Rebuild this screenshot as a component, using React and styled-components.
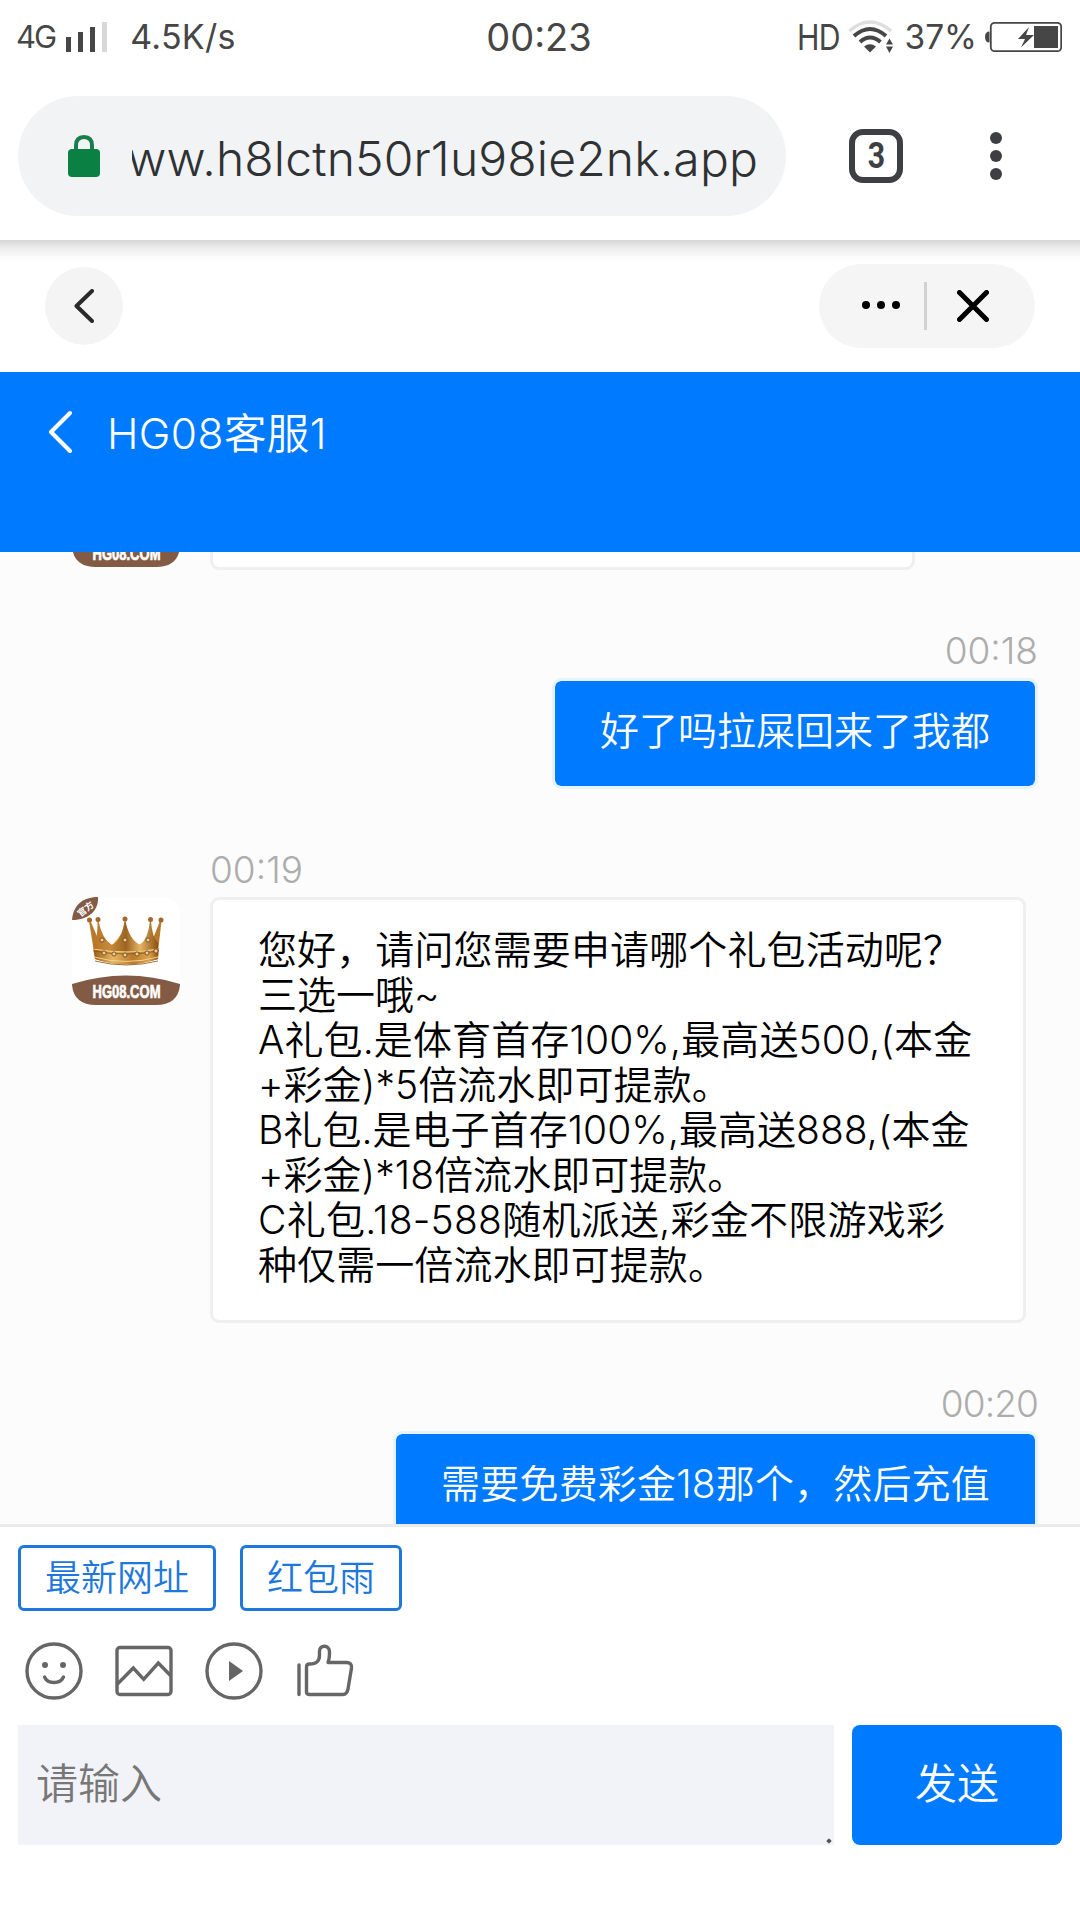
import React from "react";
import styled, { createGlobalStyle } from "styled-components";

const GlobalStyle = createGlobalStyle`
	* {
		box-sizing: border-box;
	}

	body {
		margin: 0;
		background-color: #fff;
		font-family: Inter, "Noto Sans CJK SC", sans-serif;
	}

	svg {
		display: block;
		flex: none;
	}
`;

const Page = styled.div`
	width: 1080px;
	height: 1920px;
	display: flex;
	flex-direction: column;
	overflow: hidden;
	background-color: #fff;
`;

/* ---------- status bar ---------- */

const StatusBar = styled.div`
	height: 96px;
	flex: none;
	display: grid;
	grid-template-columns: 1fr auto 1fr;
	align-items: start;
	padding: 12px 18px 0 16px;
	color: #464646;
`;

const StatusGroup = styled.div`
	display: flex;
	align-items: center;
	height: 50px;
	justify-content: ${(props) => (props.$end ? "flex-end" : "flex-start")};
`;

const StatusText = styled.span`
	display: inline-block;
	font-size: ${(props) => props.$size}px;
	line-height: 50px;
	letter-spacing: ${(props) => props.$spacing || 0}px;
	margin-left: ${(props) => props.$left || 0}px;
	white-space: nowrap;
	transform: scaleX(${(props) => props.$squeeze || 1});
	transform-origin: right center;
`;

const Signal = styled.svg`
	margin: 0 0 0 11px;
`;

const Wifi = styled.svg`
	margin: 0 10px 0 9px;
`;

const Battery = styled.svg`
	margin-left: 8px;
`;

/* ---------- browser bar ---------- */

const BrowserBar = styled.div`
	height: 144px;
	flex: none;
	display: flex;
	align-items: flex-start;
	padding-left: 18px;
	background-color: #fff;
	position: relative;
	z-index: 1;

	&::after {
		content: "";
		position: absolute;
		left: 0;
		right: 0;
		top: 144px;
		height: 22px;
		background: linear-gradient(#d6d6d6, #ececec 35%, #fafafa 75%, #fff);
	}
`;

const AddressPill = styled.div`
	width: 768px;
	height: 120px;
	border-radius: 60px;
	background-color: #f1f3f5;
	display: flex;
	align-items: center;
	padding-left: 50px;
`;

const UrlClip = styled.div`
	width: 626px;
	height: 70px;
	margin: 5px 0 0 32px;
	overflow: hidden;
	display: flex;
	justify-content: flex-end;
`;

const Url = styled.span`
	font-size: 48px;
	font-weight: 300;
	line-height: 70px;
	letter-spacing: ${(props) => props.$spacing}px;
	color: #2f3133;
	white-space: nowrap;
`;

const TabCount = styled.div`
	width: 54px;
	height: 54px;
	margin: 33px 0 0 63px;
	border: 6px solid #3d3f42;
	border-radius: 14px;
	display: flex;
	align-items: center;
	justify-content: center;
`;

const TabNumber = styled.span`
	color: #3d3f42;
	font-family: Roboto, sans-serif;
	font-size: 36px;
	font-weight: 700;
	line-height: 42px;
	transform: scaleX(0.84);
`;

const Kebab = styled.div`
	margin: 36px 0 0 87px;
	display: flex;
	flex-direction: column;
	gap: 6px;
`;

const KebabDot = styled.span`
	width: 12px;
	height: 12px;
	border-radius: 50%;
	background-color: #3d3f42;
`;

/* ---------- mini app bar ---------- */

const AppBar = styled.div`
	height: 132px;
	flex: none;
	display: flex;
	justify-content: space-between;
	align-items: center;
	padding: 0 45px;
`;

const RoundButton = styled.div`
	width: 78px;
	height: 78px;
	border-radius: 50%;
	background-color: #f4f4f4;
	display: flex;
	align-items: center;
	justify-content: center;
	position: relative;
	z-index: 2;
`;

const Capsule = styled.div`
	width: 216px;
	height: 84px;
	border-radius: 42px;
	background-color: #f5f5f5;
	display: flex;
	align-items: center;
	position: relative;
	z-index: 2;
`;

const CapsuleDots = styled.div`
	display: flex;
	gap: 7px;
	margin: -2px 24px 0 43px;
`;

const CapsuleDot = styled.span`
	width: 8px;
	height: 8px;
	border-radius: 50%;
	background-color: #000;
`;

const CapsuleDivider = styled.div`
	width: 3px;
	height: 48px;
	background-color: #d2d2d2;
	margin-right: 30px;
`;

/* ---------- chat ---------- */

const ChatHeader = styled.div`
	height: 180px;
	flex: none;
	display: flex;
	align-items: flex-start;
	padding: 30px 0 0 48px;
	background-color: #007aff;
	color: #fff;
`;

const ChatTitle = styled.div`
	margin-left: 35px;
	font-size: 42.5px;
	font-weight: 350;
	line-height: 63px;
	letter-spacing: 0.4px;
`;

const ChatBody = styled.div`
	flex: 1;
	min-height: 0;
	overflow: hidden;
	background-color: #fcfcfc;
	display: flex;
	flex-direction: column;
	gap: 54px;
	padding: 0 42px 0 72px;
`;

const Incoming = styled.div`
	display: grid;
	grid-template-columns: 108px auto;
	column-gap: 30px;
	justify-content: start;
	flex: none;
	margin-top: ${(props) => (props.$scrolled ? "-93px" : "0")};
`;

const Outgoing = styled.div`
	display: flex;
	flex-direction: column;
	align-items: flex-end;
	flex: none;
`;

const Time = styled.div`
	grid-column: 2;
	height: 54px;
	line-height: 54px;
	font-size: 37px;
	font-weight: 300;
	letter-spacing: ${(props) => props.$spacing || 0}px;
	color: #adadad;
`;

const Bubble = styled.div`
	min-height: 111px;
	width: ${(props) => (props.$width ? props.$width + "px" : "auto")};
	padding: 27px 45px 33px;
	border: 3px solid ${(props) => (props.$mine ? "#e6f3fa" : "#efefef")};
	border-radius: 9px;
	background-color: ${(props) => (props.$mine ? "#007aff" : "#fff")};
	background-clip: padding-box;
	color: ${(props) => (props.$mine ? "#fff" : "#000")};
	font-size: 39px;
	font-weight: 350;
	line-height: 45px;
	white-space: nowrap;
`;

const Line = styled.div`
	height: 45px;
	letter-spacing: ${(props) => props.$spacing || 0}px;
`;

/* ---------- composer ---------- */

const Composer = styled.div`
	height: 396px;
	flex: none;
	border-top: 3px solid #ebebeb;
	padding: 18px 18px 0;
	background-color: #fff;
`;

const ChipRow = styled.div`
	display: flex;
	gap: 24px;
`;

const Chip = styled.div`
	height: 66px;
	padding: 0 24px;
	border: 3px solid #1e78dc;
	border-radius: 6px;
	color: #1e78dc;
	font-size: 36px;
	font-weight: 350;
	line-height: 60px;
`;

const ToolRow = styled.div`
	display: flex;
	gap: 32px;
	padding: 31px 0 25px 7px;
`;

const ToolIcon = styled.svg.attrs({ width: 58, height: 58, viewBox: "0 0 58 58" })`
	fill: none;
	stroke: #666;
	stroke-width: 3.4;
	stroke-linejoin: round;
	overflow: visible;
`;

const InputRow = styled.div`
	display: flex;
	gap: 18px;
`;

const InputBox = styled.div`
	width: 816px;
	height: 120px;
	padding-left: 18px;
	background-color: #f2f3f8;
	color: #777;
	font-size: 42px;
	font-weight: 350;
	line-height: 117px;
	position: relative;

	&::after {
		content: "";
		position: absolute;
		right: 3px;
		bottom: 2px;
		width: 4px;
		height: 4px;
		border-radius: 1px;
		transform: rotate(45deg);
		background-color: #555;
	}
`;

const SendButton = styled.div`
	width: 210px;
	height: 120px;
	border-radius: 8px;
	background-color: #007aff;
	color: #fff;
	font-size: 42px;
	font-weight: 350;
	line-height: 117px;
	text-align: center;
`;

const Avatar = () => (
	<svg width="108" height="108" viewBox="0 0 108 108">
		<defs>
			<clipPath id="avatarClip">
				<path d="M26 0H88Q108 0 108 20V88Q106 108 84 108H24Q2 108 0 88V23Q2 2 26 0Z" />
			</clipPath>
			<linearGradient id="gold" x1="0" x2="1">
				<stop offset="0" stopColor="#b87521" />
				<stop offset="0.25" stopColor="#c58c3b" />
				<stop offset="0.5" stopColor="#9c6420" />
				<stop offset="0.72" stopColor="#e5b566" />
				<stop offset="1" stopColor="#8c5110" />
			</linearGradient>
			<linearGradient id="band" x1="0" x2="1">
				<stop offset="0" stopColor="#9a5a12" />
				<stop offset="0.3" stopColor="#e6b661" />
				<stop offset="0.6" stopColor="#b87a2b" />
				<stop offset="0.85" stopColor="#dca44c" />
				<stop offset="1" stopColor="#87490a" />
			</linearGradient>
		</defs>
		<g clipPath="url(#avatarClip)">
			<rect width="108" height="108" fill="#fff" />
			<path d="M0 87Q54 70 108 87V108H0Z" fill="#835b44" />
		</g>
		<path d="M0 23C1 9 10 0 26 0C27 13 17 23 0 23Z" fill="#835b44" />
		<text
			x="13.5"
			y="15.3"
			fill="#fff"
			fontSize="9"
			fontWeight="700"
			textAnchor="middle"
			transform="rotate(-38 13.5 12)"
		>
			官方
		</text>
		{/* far rim, seen between the front spikes */}
		<path d="M27 46Q34 53 42 46L49 37H57Q66 56 75 40L80 52H28Z" fill="#eebb70" />
		{/* outer spikes */}
		<path d="M17 24H18.500L27 44V56L22 55Z" fill="#b9792c" />
		<path d="M89.500 24H88L80 44V56L86 55Z" fill="#b9792c" />
		{/* front spikes */}
		<path
			d="M25.500 24H26.500Q30 42 40 48Q50 42 52.500 24H53.500Q57 42 68 48Q76 42 78 24H79Q80 40 86 46L86 62Q54 72 23 62L22 46Q26 40 25.500 24Z"
			fill="url(#gold)"
		/>
		<path d="M21 51Q54 58 87 51L86 62Q54 73 23 62Z" fill="url(#band)" />
		<path d="M21 52Q54 58 87 52M22 60Q54 69 86 60" fill="none" stroke="#f4d18c" strokeWidth="1" />
		<path d="M22 54Q54 60 86 54M23 64Q54 72 86 64" fill="none" stroke="#8a500f" strokeWidth="0.8" />
		{[
			[17.5, 23],
			[26, 22.5],
			[53, 22],
			[78.5, 22.5],
			[89, 23],
		].map(([x, y]) => (
			<circle key={x} cx={x} cy={y} r="2.5" fill="#a4672a" />
		))}
		{[
			[30, 43],
			[53, 43],
			[76, 43],
			[32, 56],
			[42, 57],
			[53, 58],
			[65, 57],
			[75, 56],
			[84, 54],
		].map(([x, y]) => (
			<circle key={x + "-" + y} cx={x} cy={y} r="2.1" fill="#e8cfa6" stroke="#80501c" strokeWidth="1" />
		))}
		<text
			x="54.5"
			y="101"
			fill="#fff"
			stroke="#fff"
			strokeWidth="0.7"
			fontFamily="Liberation Sans, sans-serif"
			fontSize="19"
			fontWeight="700"
			textAnchor="middle"
			textLength="68"
			lengthAdjust="spacingAndGlyphs"
		>
			HG08.COM
		</text>
	</svg>
);

const offerLines = [
	["您好，请问您需要申请哪个礼包活动呢？", 0.12],
	["三选一哦~", 0],
	["A礼包.是体育首存100%,最高送500,(本金", 0.13],
	["+彩金)*5倍流水即可提款。", 0.08],
	["B礼包.是电子首存100%,最高送888,(本金", 0.04],
	["+彩金)*18倍流水即可提款。", 0.04],
	["C礼包.18-588随机派送,彩金不限游戏彩", 0.25],
	["种仅需一倍流水即可提款。", 0.08],
];

const App = () => {
	return (
		<Page>
			<GlobalStyle />
			<StatusBar>
				<StatusGroup>
					<StatusText $size={31} $spacing={-2}>
						4G
					</StatusText>
					<Signal width="41" height="30" viewBox="0 0 41 30">
						<rect x="0" y="15" width="5" height="15" fill="#464646" />
						<rect x="12" y="10" width="5" height="20" fill="#464646" />
						<rect x="24" y="5" width="5" height="25" fill="#464646" />
						<rect x="36" y="0" width="5" height="30" fill="#d8d8d8" />
					</Signal>
					<StatusText $size={34} $left={23} $spacing={0.3}>
						4.5K/s
					</StatusText>
				</StatusGroup>
				<StatusText $size={38}>00:23</StatusText>
				<StatusGroup $end>
					<StatusText $size={36} $spacing={-1} $squeeze={0.84}>
						HD
					</StatusText>
					<Wifi width="46" height="34" viewBox="0 0 46 34">
						<g fill="none">
							<path d="M1.5 11Q22 -7 43 11" stroke="#dedede" strokeWidth="3.6" />
							<path d="M6 16Q22 2 38 16" stroke="#464646" strokeWidth="4" />
							<path d="M12 22Q22 13 32.500 22" stroke="#464646" strokeWidth="4" />
						</g>
						<path d="M16 26.500Q22 22 28 26.500L22 32.500Z" fill="#464646" />
						<path d="M41.500 18.500L45 24.500H38ZM41.500 33L45 26.500H38Z" fill="#464646" />
					</Wifi>
					<StatusText $size={33.5}>37%</StatusText>
					<Battery width="77" height="30" viewBox="0 0 77 30">
						<path d="M4.500 9.500Q0 9.500 0 15Q0 20.500 4.500 20.500Z" fill="#464646" />
						<rect x="5.800" y="0.800" width="70.400" height="28.400" rx="4" fill="none" stroke="#464646" strokeWidth="1.800" />
						<rect x="49" y="4" width="24" height="22" fill="#464646" />
						<path d="M44 5L33 17H40L36 25.500L49 13H41Z" fill="#464646" />
					</Battery>
				</StatusGroup>
			</StatusBar>

			<BrowserBar>
				<AddressPill>
					<svg width="32" height="42" viewBox="0 0 32 42">
						<path d="M8 18V10.500Q8 2 16 2Q24 2 24 10.500V18" fill="none" stroke="#1c7d4c" strokeWidth="4" />
						<rect y="14" width="32" height="28" rx="4" fill="#0b8043" />
					</svg>
					<UrlClip>
						<Url $spacing={0.15}>www.h8lctn50r1u98ie2nk.app</Url>
					</UrlClip>
				</AddressPill>
				<TabCount>
					<TabNumber>3</TabNumber>
				</TabCount>
				<Kebab>
					<KebabDot />
					<KebabDot />
					<KebabDot />
				</Kebab>
			</BrowserBar>

			<AppBar>
				<RoundButton>
					<svg width="20" height="34" viewBox="0 0 20 34">
						<path d="M18 2L2.500 17L18 32" fill="none" stroke="#2a2a2a" strokeWidth="4" strokeLinecap="round" strokeLinejoin="round" />
					</svg>
				</RoundButton>
				<Capsule>
					<CapsuleDots>
						<CapsuleDot />
						<CapsuleDot />
						<CapsuleDot />
					</CapsuleDots>
					<CapsuleDivider />
					<svg width="32" height="32" viewBox="0 0 32 32">
						<path d="M2.500 2.500L29.500 29.500M29.500 2.500L2.500 29.500" stroke="#000" strokeWidth="5" strokeLinecap="round" />
					</svg>
				</Capsule>
			</AppBar>

			<ChatHeader>
				<svg width="24" height="60" viewBox="0 0 24 60">
					<path d="M22 11L3 30L22 49" fill="none" stroke="#fff" strokeWidth="4" strokeLinecap="round" strokeLinejoin="round" />
				</svg>
				<ChatTitle>HG08客服1</ChatTitle>
			</ChatHeader>

			<ChatBody>
				<Incoming $scrolled>
					<Avatar />
					<Bubble $width={705} />
				</Incoming>
				<Outgoing>
					<Time>00:18</Time>
					<Bubble $mine>
						<Line>好了吗拉屎回来了我都</Line>
					</Bubble>
				</Outgoing>
				<Incoming>
					<Time>00:19</Time>
					<Avatar />
					<Bubble $width={816}>
						{offerLines.map(([text, spacing]) => (
							<Line key={text} $spacing={spacing}>
								{text}
							</Line>
						))}
					</Bubble>
				</Incoming>
				<Outgoing>
					<Time $spacing={-0.9}>00:20</Time>
					<Bubble $mine>
						<Line $spacing={0.18}>需要免费彩金18那个，然后充值</Line>
					</Bubble>
				</Outgoing>
			</ChatBody>

			<Composer>
				<ChipRow>
					<Chip>最新网址</Chip>
					<Chip>红包雨</Chip>
				</ChipRow>
				<ToolRow>
					<ToolIcon>
						<circle cx="29" cy="29" r="27" />
						<circle cx="20" cy="23" r="3" fill="#666" stroke="none" />
						<circle cx="38" cy="23" r="3" fill="#666" stroke="none" />
						<path d="M19.500 35Q22 40.500 29 40.500Q36 40.500 38.500 35" strokeLinecap="round" />
					</ToolIcon>
					<ToolIcon>
						<rect x="2" y="5.500" width="54" height="47" rx="3" />
						<path d="M2.500 42L18.300 26L28.700 37.300L43.300 21L56 34" strokeLinejoin="miter" />
					</ToolIcon>
					<ToolIcon>
						<circle cx="29" cy="29" r="27" />
						<path d="M24 19L38 29L24 39Z" fill="#666" stroke="none" />
					</ToolIcon>
					<ToolIcon>
						<path d="M4 23V52.500" strokeLinecap="round" />
						<path d="M11.500 50V25Q11.500 22 14.500 22C22 22 24.500 19 24.500 13V9C24.500 2.500 34.500 2.500 34.500 10C34.500 15 34.500 17 33 20.500H51.500Q57 20.500 56.500 26L53 47Q52 52.500 48 52.500H14Q11.500 52.500 11.500 50Z" />
					</ToolIcon>
				</ToolRow>
				<InputRow>
					<InputBox>请输入</InputBox>
					<SendButton>发送</SendButton>
				</InputRow>
			</Composer>
		</Page>
	);
};

export default App;
